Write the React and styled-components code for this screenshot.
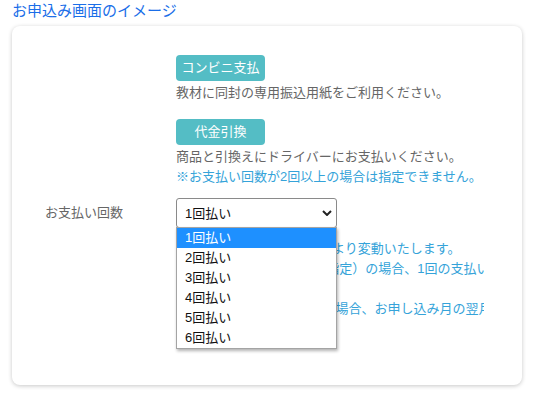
import React from 'react';
import styled, { createGlobalStyle } from 'styled-components';

const GlobalStyle = createGlobalStyle`
  body {
    margin: 0;
    background: #fff;
    font-family: "Liberation Sans", "Noto Sans CJK JP", sans-serif;
  }
`;

const options = ['1回払い', '2回払い', '3回払い', '4回払い', '5回払い', '6回払い'];

const App = () => {
  return (
    <Page>
      <GlobalStyle />
      <Title>お申込み画面のイメージ</Title>
      <Card>
        <Row>
          <Label />
          <Value>
            <Method>
              <MethodButton>コンビニ支払</MethodButton>
              <Note>教材に同封の専用振込用紙をご利用ください。</Note>
            </Method>
            <Method>
              <MethodButton>代金引換</MethodButton>
              <Note>商品と引換えにドライバーにお支払いください。</Note>
              <Note $blue>※お支払い回数が2回以上の場合は指定できません。</Note>
            </Method>
          </Value>
        </Row>
        <Row>
          <Label>お支払い回数</Label>
          <Value>
            <SelectWrap>
              <Select defaultValue="1回払い">
                {options.map(o => (
                  <option key={o}>{o}</option>
                ))}
              </Select>
              <Chevron width="10" height="6" viewBox="0 0 10 6">
                <path d="M1 1l4 4 4-4" fill="none" stroke="#222" strokeWidth="2" />
              </Chevron>
              <OptionList>
                {options.map((o, i) => (
                  <OptionItem key={o} $active={i === 0}>{o}</OptionItem>
                ))}
              </OptionList>
            </SelectWrap>
            <Notes>
              <Note $blue>※手数料はお支払い回数により変動いたします。</Note>
              <Note $blue>※2回以上（支払い回数を指定）の場合、1回の支払い金額は均等となります。</Note>
              <Note $blue>となります。</Note>
              <Note $blue>※ お支払い回数を指定した場合、お申し込み月の翌月より開始となります。</Note>
            </Notes>
          </Value>
        </Row>
      </Card>
    </Page>
  );
};

export default App;

const Page = styled.div`
  padding: 1px 13px 13px 12px;
`;

const Title = styled.h2`
  margin: 0;
  font-size: 15px;
  font-weight: normal;
  line-height: 20px;
  color: #1a6ee8;
`;

const Card = styled.div`
  margin-top: 5px;
  height: 359px;
  box-sizing: border-box;
  padding: 29px 38px 0 33px;
  background: #fff;
  border-radius: 8px;
  box-shadow: 0 1px 4px rgba(0, 0, 0, 0.22);
`;

const Row = styled.div`
  display: grid;
  grid-template-columns: 131px 1fr;
  & + & {
    margin-top: 11px;
  }
`;

const Label = styled.div`
  font-size: 13px;
  line-height: 30px;
  color: #666;
`;

const Value = styled.div`
  min-width: 0;
`;

const Method = styled.div`
  & + & {
    margin-top: 16px;
  }
`;

const MethodButton = styled.div`
  width: 89px;
  height: 26px;
  margin-bottom: 2px;
  border-radius: 4px;
  background: #54bdc5;
  color: #fff;
  font-size: 13px;
  line-height: 26px;
  text-align: center;
`;

const Note = styled.div`
  font-size: 13px;
  line-height: 20px;
  white-space: nowrap;
  color: ${({ $blue }) => ($blue ? '#35a3d9' : '#666')};
`;

const SelectWrap = styled.div`
  position: relative;
  width: 161px;
`;

const Select = styled.select`
  appearance: none;
  display: block;
  width: 161px;
  height: 30px;
  padding: 0 8px;
  border: 1px solid #8a8a8a;
  border-radius: 3px;
  background: #fff;
  font-family: inherit;
  font-size: 13px;
  color: #111;
`;

const Chevron = styled.svg`
  position: absolute;
  right: 5px;
  top: 12px;
  pointer-events: none;
`;

const OptionList = styled.ul`
  position: absolute;
  left: 0;
  top: 29px;
  z-index: 2;
  width: 161px;
  box-sizing: border-box;
  margin: 0;
  padding: 0;
  list-style: none;
  background: #fff;
  border: 1px solid #a4a4a4;
  box-shadow: 1px 2px 3px rgba(0, 0, 0, 0.3);
`;

const OptionItem = styled.li`
  height: 20px;
  padding-left: 8px;
  font-size: 13px;
  line-height: 20px;
  color: ${({ $active }) => ($active ? '#fff' : '#111')};
  background: ${({ $active }) => ($active ? '#1e90ff' : '#fff')};
`;

const Notes = styled.div`
  margin-top: 11px;
  overflow: hidden;
`;
